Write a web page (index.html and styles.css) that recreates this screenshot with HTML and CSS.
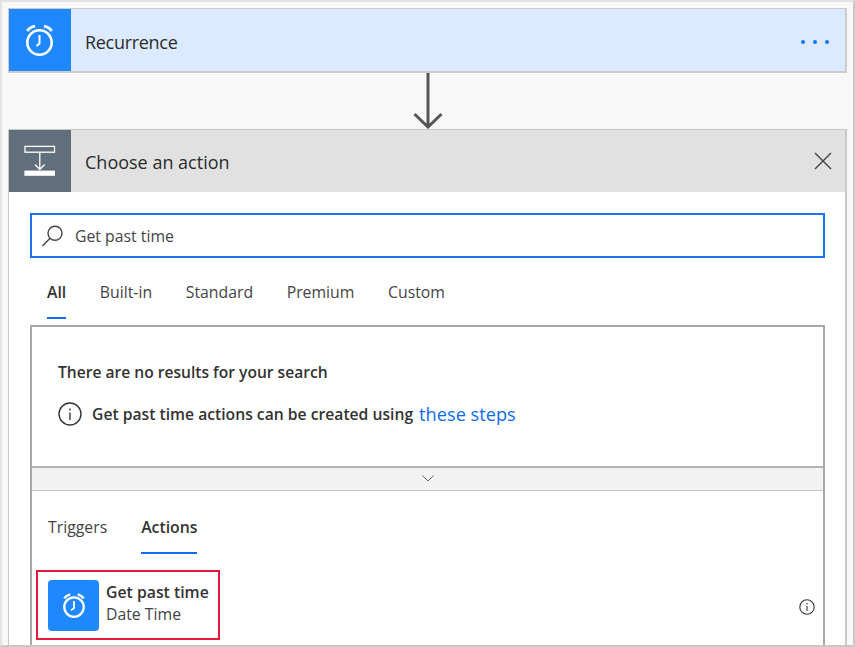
FILE: index.html
```html
<!DOCTYPE html>
<html>
<head>
    <title>Choose an action</title>
    <link rel="stylesheet" href="styles.css">
</head>
<body>
    <div class="frame">
        <div class="card-head recurrence">
            <div class="head-icon blue">
                <svg width="32" height="32" viewBox="0 0 32 32" fill="none" stroke="#fff">
                    <circle cx="15.5" cy="18.5" r="12.2" stroke-width="2.6"/>
                    <path d="M15.5 11V19.5L12.5 22" stroke-width="2"/>
                    <path d="M3.3 7C5 4.3 7.8 2.8 11 2.2M27.7 7C26 4.3 23.2 2.8 20 2.2" stroke-width="2.8"/>
                </svg>
            </div>
            <div class="head-title">Recurrence</div>
            <div class="dots"><span></span><span></span><span></span></div>
        </div>

        <div class="connector">
            <svg width="30" height="56" viewBox="0 0 30 56" fill="none" stroke="#555" stroke-width="3">
                <path d="M15 0V54M1.5 41L15 54L28.5 41"/>
            </svg>
        </div>

        <div class="card">
            <div class="card-head choose">
                <div class="head-icon slate">
                    <svg width="32" height="32" viewBox="0 0 32 32" fill="none" stroke="#fff" stroke-width="1.3">
                        <rect x="1" y="1.4" width="29.5" height="5.8"/>
                        <path d="M15.8 7.5V24.5M11 19.5L15.8 24.5L20.6 19.5"/>
                        <rect x="0.4" y="25.6" width="30.6" height="5.2" fill="#fff" stroke="none"/>
                    </svg>
                </div>
                <div class="head-title">Choose an action</div>
                <svg class="close" width="18" height="18" viewBox="0 0 18 18" fill="none" stroke="#444" stroke-width="1.4">
                    <path d="M1 1L17 17M17 1L1 17"/>
                </svg>
            </div>

            <div class="card-body">
                <div class="search">
                    <svg width="24" height="24" viewBox="0 0 24 24" fill="none" stroke="#444" stroke-width="1.4">
                        <circle cx="13" cy="9.2" r="7"/>
                        <path d="M8 14.2L0.5 22"/>
                    </svg>
                    <span>Get past time</span>
                </div>

                <div class="tabs">
                    <div class="tab active">All</div>
                    <div class="tab">Built-in</div>
                    <div class="tab">Standard</div>
                    <div class="tab">Premium</div>
                    <div class="tab">Custom</div>
                </div>

                <div class="results">
                    <div class="message">
                        <div class="no-results">There are no results for your search</div>
                        <div class="hint">
                            <svg width="24" height="24" viewBox="0 0 24 24" fill="none" stroke="#333" stroke-width="1.4">
                                <circle cx="12" cy="12" r="11"/>
                                <path d="M12 10.5V18M12 6.5V8.5"/>
                            </svg>
                            <span>Get past time actions can be created using</span>
                            <a href="#">these steps</a>
                        </div>
                    </div>

                    <div class="collapse">
                        <svg width="12" height="7" viewBox="0 0 12 7" fill="none" stroke="#666" stroke-width="1">
                            <path d="M0.5 0.5L6 6L11.5 0.5"/>
                        </svg>
                    </div>

                    <div class="sub-tabs">
                        <div class="sub-tab">Triggers</div>
                        <div class="sub-tab active">Actions</div>
                    </div>

                    <div class="action-row">
                        <div class="action">
                            <div class="action-icon">
                                <svg width="24" height="27" viewBox="0 0 32 36" fill="none" stroke="#fff">
                                    <circle cx="16" cy="20" r="13" stroke-width="3"/>
                                    <path d="M16 12V21.5L12 24.5" stroke-width="2.4"/>
                                    <path d="M3 8.5C5 5.5 7.5 4 11 3.2M29 8.5C27 5.5 24.5 4 21 3.2" stroke-width="3.2"/>
                                </svg>
                            </div>
                            <div class="action-text">
                                <div class="action-name">Get past time</div>
                                <div class="action-sub">Date Time</div>
                            </div>
                        </div>
                        <svg class="action-info" width="16" height="16" viewBox="0 0 16 16" fill="none" stroke="#333" stroke-width="1.1">
                            <circle cx="8" cy="8" r="7.2"/>
                            <path d="M8 7V12M8 4V5.4"/>
                        </svg>
                    </div>
                </div>
            </div>
        </div>
    </div>
</body>
</html>
```

FILE: styles.css
```css
html, body {
    margin: 0;
    height: 100%;
}

body {
    font-family: 'Open Sans', 'Noto Sans', sans-serif;
    color: #333;
    overflow: hidden;
}

.frame {
    box-sizing: border-box;
    width: 855px;
    height: 647px;
    padding: 6px 6px 0 6px;
    background-color: #f8f8f8;
    border: 2px solid #e2e2e2;
    border-right-color: #c8c8c8;
    border-bottom-color: #c8c8c8;
    display: flex;
    flex-direction: column;
    overflow: hidden;
}

.card-head {
    display: flex;
    align-items: center;
    height: 62px;
    flex-shrink: 0;
}

.recurrence {
    height: 62px;
    background-color: #dbeaff;
    border: 2px solid #cccccc;
    border-left-width: 1px;
    border-top-width: 1px;
}

.recurrence .head-title {
    margin-top: 3px;
    letter-spacing: -0.3px;
}

.choose {
    background-color: #e1e1e1;
}

.head-icon {
    width: 62px;
    height: 62px;
    display: flex;
    align-items: center;
    justify-content: center;
    flex-shrink: 0;
}

.blue {
    background-color: #2088ff;
}

.slate {
    background-color: #616e7c;
}

.head-title {
    flex: 1;
    margin-left: 14px;
    margin-top: 2px;
    font-size: 18px;
    color: #2b2b2b;
}

.dots {
    display: flex;
    gap: 8px;
    margin: 3px 16px 0 0;
}

.dots span {
    width: 4px;
    height: 4px;
    border-radius: 50%;
    background-color: #0f78e8;
}

.connector {
    height: 56px;
    display: flex;
    justify-content: center;
    flex-shrink: 0;
}

.card {
    flex: 1;
    display: flex;
    flex-direction: column;
    border: 1px solid #c8c8c8;
    border-right-width: 2px;
    border-bottom: none;
    min-height: 0;
}

.close {
    margin-right: 13px;
}

.card-body {
    flex: 1;
    background-color: #fff;
    padding: 21px 20px 0 21px;
    display: flex;
    flex-direction: column;
    min-height: 0;
}

.search {
    box-sizing: border-box;
    height: 45px;
    border: 2px solid #1a73f0;
    display: flex;
    align-items: center;
    padding-left: 10px;
    font-size: 15.8px;
    color: #444;
    flex-shrink: 0;
}

.search span {
    margin-left: 9px;
}

.tabs {
    display: flex;
    gap: 33.6px;
    height: 67px;
    padding-left: 17px;
    flex-shrink: 0;
}

.tab {
    box-sizing: border-box;
    height: 61px;
    padding-top: 23px;
    font-size: 15.8px;
    color: #444;
}

.tab.active,
.sub-tab.active {
    font-weight: 600;
    color: #333;
    border-bottom: 2px solid #0f6cf0;
}

.results {
    flex: 1;
    border: 2px solid #a8a8a8;
    border-bottom: none;
    min-height: 0;
}

.message {
    box-sizing: border-box;
    height: 141px;
    padding: 34px 0 0 26px;
    border-bottom: 2px solid #b4b4b4;
}

.no-results {
    font-size: 15.6px;
    font-weight: 600;
}

.hint {
    display: flex;
    align-items: center;
    margin-top: 19px;
    font-size: 15.7px;
    font-weight: 600;
}

.hint span {
    margin-left: 10px;
}

.hint a {
    margin-left: 6px;
    font-size: 18.2px;
    font-weight: 400;
    color: #0f6cf0;
    text-decoration: none;
}

.collapse {
    box-sizing: border-box;
    height: 23px;
    padding-bottom: 2px;
    background-color: #f2f2f2;
    border-bottom: 1px solid #c4c4c4;
    display: flex;
    align-items: center;
    justify-content: center;
}

.sub-tabs {
    display: flex;
    gap: 34px;
    padding-left: 16px;
    height: 63px;
}

.sub-tab {
    box-sizing: border-box;
    height: 63px;
    padding-top: 25px;
    font-size: 15.8px;
    color: #444;
}

.action-row {
    display: flex;
    align-items: center;
    justify-content: space-between;
    padding: 16px 8px 0 4px;
}

.action {
    box-sizing: border-box;
    width: 184px;
    height: 70px;
    border: 2px solid #e8173f;
    display: flex;
    align-items: center;
    padding-left: 10px;
}

.action-icon {
    width: 51px;
    height: 51px;
    border-radius: 4px;
    background-color: #2088ff;
    display: flex;
    align-items: center;
    justify-content: center;
    flex-shrink: 0;
}

.action-text {
    margin: 0 0 4px 7px;
    font-size: 15.8px;
    line-height: 22px;
}

.action-name {
    font-weight: 600;
}

.action-sub {
    color: #444;
}

.action-info {
    margin-top: 4px;
}
```
